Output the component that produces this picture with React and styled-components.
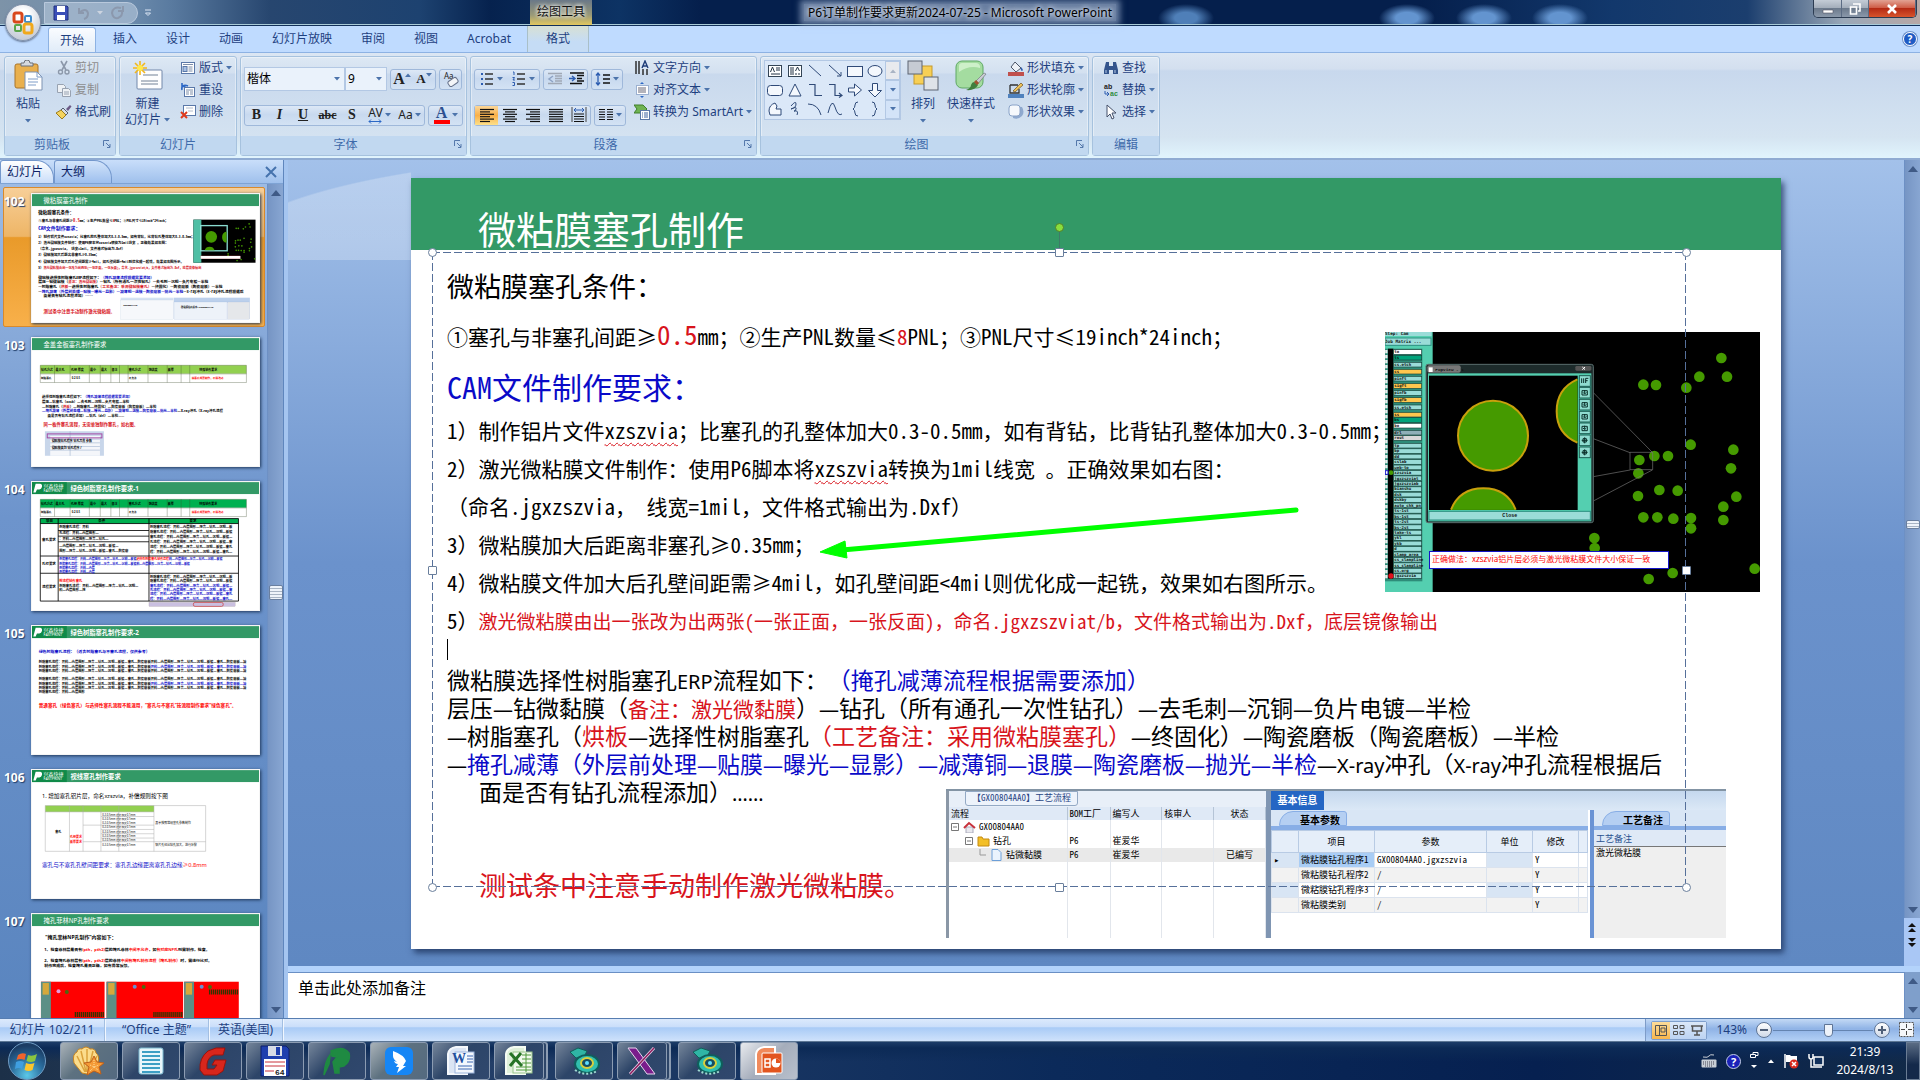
import React from 'react';
import styled, { createGlobalStyle, css } from 'styled-components';

const ui = '"Noto Sans", "Noto Sans CJK SC", sans-serif';
const song = '"Noto Sans Mono CJK SC", "Liberation Mono", "Noto Sans CJK SC", monospace';

const RED = '#d8141c';
const BLUE = '#0a0ac8';
const BLACK = '#000';

/* ---------- data ---------- */

const tabs = ['插入', '设计', '动画', '幻灯片放映', '审阅', '视图', 'Acrobat'];

// y is the baseline used by the thumbnail
const lines = [
    { kind: 'head', size: 27, y: 118, parts: [['微粘膜塞孔条件：']] },
    {
        kind: 'head',
        size: 21,
        y: 167,
        parts: [
            ['①塞孔与非塞孔间距≥'],
            ['0.5', RED, 27],
            ['mm；②生产PNL数量≤'],
            ['8', RED],
            ['PNL；③PNL尺寸≤19inch*24inch；'],
        ],
    },
    { kind: 'head', size: 30, y: 218, parts: [['CAM文件制作要求：', BLUE]] },
    {
        kind: 'step',
        size: 21,
        y: 262,
        parts: [
            ['1）制作铝片文件'],
            ['xzszvia', BLACK, 21, true],
            ['；比塞孔的孔整体加大0.3-0.5mm，如有背钻，比背钻孔整体加大0.3-0.5mm；'],
        ],
    },
    {
        kind: 'step',
        size: 21,
        y: 300,
        parts: [
            ['2）激光微粘膜文件制作：使用P6脚本将'],
            ['xzszvia', BLACK, 21, true],
            ['转换为1mil线宽 。正确效果如右图：'],
        ],
    },
    {
        kind: 'step',
        size: 21,
        y: 338,
        parts: [['（命名.jgxzszvia， 线宽=1mil，文件格式输出为.Dxf）']],
    },
    { kind: 'step', size: 21, y: 376, parts: [['3）微粘膜加大后距离非塞孔≥0.35mm；']] },
    {
        kind: 'step',
        size: 21,
        y: 414,
        narrowSigns: true,
        parts: [['4）微粘膜文件加大后孔壁间距需≥4mil，如孔壁间距<4mil则优化成一起铣，效果如右图所示。']],
    },
    {
        kind: 'step',
        size: 21,
        y: 452,
        parts: [
            ['5）'],
            [
                '激光微粘膜由出一张改为出两张(一张正面，一张反面)，命名.jgxzszviat/b，文件格式输出为.Dxf，底层镜像输出',
                RED,
                19,
            ],
        ],
    },
    { kind: 'caret', size: 21, y: 480, parts: [] },
    {
        kind: 'flow',
        size: 23,
        y: 511,
        parts: [['微粘膜选择性树脂塞孔ERP流程如下：'], ['（掩孔减薄流程根据需要添加）', BLUE]],
    },
    {
        kind: 'flow',
        size: 23,
        y: 539,
        parts: [
            ['层压—钻微黏膜（'],
            ['备注：激光微黏膜', RED, 21],
            ['）—钻孔（所有通孔一次性钻孔）—去毛刺—沉铜—负片电镀—半检'],
        ],
    },
    {
        kind: 'flow',
        size: 23,
        y: 566,
        parts: [
            ['—树脂塞孔（'],
            ['烘板', RED],
            ['—选择性树脂塞孔'],
            ['（工艺备注：采用微粘膜塞孔）', RED],
            ['—终固化）—陶瓷磨板（陶瓷磨板）—半检'],
        ],
    },
    {
        kind: 'flow',
        size: 23,
        y: 594,
        parts: [
            ['—'],
            ['掩孔减薄（外层前处理—贴膜—曝光—显影）—减薄铜—退膜—陶瓷磨板—抛光—半检', BLUE],
            ['—X-ray冲孔（X-ray冲孔流程根据后'],
        ],
    },
    { kind: 'flow', size: 23, y: 621, indent: true, parts: [['面是否有钻孔流程添加）……']] },
    {
        kind: 'last',
        size: 27,
        y: 717,
        indent: true,
        parts: [['测试条中注意手动制作激光微粘膜。', RED]],
    },
];

const layers = [
    ['to', 96, '#fff'],
    ['ts', 113, '#00a37b'],
    ['cs.etch', 134, '#9adcd8'],
    ['cs', 155, '#ffc64e'],
    ['pinft', 176, '#9adcd8'],
    ['sigft', 198, '#ffc64e'],
    ['pinfb', 219, '#9adcd8'],
    ['sigfb', 240, '#ffc64e'],
    ['ss.etch', 262, '#9adcd8'],
    ['ss', 284, '#ffc64e'],
    ['bs', 300, '#00a37b'],
    ['bo', 317, '#fff'],
    ['drl', 338, '#8fb0b8'],
    ['rout', 354, '#d8d8d8'],
    ...[
        'tp', 'bp', 'dd', 'cslab', 'web-to', 'xzszvia', 'jgxzszviat', 'jgxzszviab', 'bianshu', 'dsk',
        'dskby', 'auto_chk_pn', 'ts-1st', 'bs-1st', 'ts-2st', 'bs-2st', 'take-ts', 'ykl', 'ykb', 'd',
        'clamp_area', 'cs_clampline', 'ss_clampline', 'cs.org', 'jgxzszvia',
    ].map((name, i) => [name, 377 + i * 16.3, '#9adcd8']),
];

const drills = [
    [790, 194], [828, 195], [919, 203], [958, 170], [1024, 114], [1041, 170], [932, 374], [1060, 389],
    [1053, 445], [778, 420], [823, 408], [864, 408], [775, 460], [838, 510], [893, 512], [774, 528],
    [1069, 530], [1030, 560], [1030, 600], [790, 592], [832, 592], [880, 596], [933, 594], [933, 625],
    [643, 654], [644, 684], [878, 759], [806, 777], [1124, 746],
];

/* ---------- small icons ---------- */

const Svg = ({ w = 16, h = 16, box, children }) => (
    <svg width={w} height={h} viewBox={box || `0 0 ${w} ${h}`} fill="none" aria-hidden="true">
        {children}
    </svg>
);

const Caret = ({ up, color = '#4c73ab' }) => (
    <Svg w={6} h={4}>
        <path d={up ? 'M0 4l3-3.5L6 4z' : 'M0 0h6L3 3.5z'} fill={color} />
    </Svg>
);

const Lines = ({ x = 1, widths = [14, 10, 14, 10, 14, 10], align = 'left' }) =>
    widths.map((w, i) => {
        const sx = align === 'left' ? x : align === 'right' ? x + 14 - w : x + (14 - w) / 2;
        return <path key={i} d={`M${sx} ${2.5 + i * 2.4}h${w}`} stroke="#111" strokeWidth="1.2" />;
    });

const icons = {
    paste: (
        <Svg w={30} h={32}>
            <rect x="2" y="4" width="23" height="24" rx="2" fill="#e9b04e" stroke="#a9742a" />
            <path d="M8 6V3h3a3 3 0 016 0h3v3z" fill="#d5d9df" stroke="#6d7178" />
            <path d="M12 12h12l5 5v13H12z" fill="#fff" stroke="#7f93b2" />
            <path d="M24 12v5h5M15 19h10M15 22h10M15 25h8" stroke="#7f9dc8" />
        </Svg>
    ),
    cut: (
        <Svg>
            <path d="M5 1l5 9M11 1L6 10" stroke="#8c98aa" strokeWidth="1.6" />
            <circle cx="4.500" cy="12" r="2" stroke="#8c98aa" strokeWidth="1.4" />
            <circle cx="11" cy="12" r="2" stroke="#8c98aa" strokeWidth="1.4" />
        </Svg>
    ),
    copy: (
        <Svg>
            <path d="M1.500 2.500h6l2 2v6h-8z" fill="#eef1f5" stroke="#98a2b1" />
            <path d="M6.500 6.500h6l2 2v6h-8z" fill="#eef1f5" stroke="#98a2b1" />
            <path d="M8 10h5M8 12h5" stroke="#98a2b1" />
        </Svg>
    ),
    brush: (
        <Svg>
            <path d="M10 5l4-4 1.500 1.500L12 7z" fill="#6c5a86" />
            <path d="M7 4l5 5-2 2-5-5z" fill="#d7dde6" stroke="#555f70" />
            <path d="M5 6l5 5-4 4L0 9z" fill="#f4d35e" stroke="#9c7c1c" />
        </Svg>
    ),
    newSlide: (
        <Svg w={30} h={30}>
            <rect x="4" y="9" width="25" height="19" rx="1" fill="#fdfdfe" stroke="#7388aa" />
            <path d="M10 14h15M8 20h17M8 23h17" stroke="#b7bfca" strokeWidth="2" />
            <path d="M7 0v14M0 7h14M2 2l10 10M12 2L2 12" stroke="#f2b61c" strokeWidth="1.6" />
            <circle cx="7" cy="7" r="3" fill="#ffe94d" />
        </Svg>
    ),
    layout: (
        <Svg>
            <rect x="1.500" y="2.500" width="13" height="11" fill="#fff" stroke="#5a78a8" />
            <path d="M3 4.500h10M8.500 7h4M8.500 9h4M8.500 11h4" stroke="#7d8ea9" />
            <rect x="3" y="6.500" width="4" height="5" fill="#a7c0e4" stroke="#5a78a8" />
        </Svg>
    ),
    reset: (
        <Svg>
            <rect x="4.500" y="5.500" width="10" height="9" fill="#fff" stroke="#5a78a8" />
            <path d="M6 8h7M6 10h3M10 10h3M6 12h3M10 12h3" stroke="#7d8ea9" />
            <path d="M2 8c-1-4 2-6 6-4M2 1v3.500h3.500" stroke="#2c68c6" strokeWidth="1.600" />
        </Svg>
    ),
    remove: (
        <Svg>
            <rect x="3.500" y="1.500" width="12" height="10" fill="#fff" stroke="#5a78a8" />
            <path d="M6 4h7M8 7h5" stroke="#b2bccb" />
            <path d="M1 8l6 6M7 8l-6 6" stroke="#e03a1c" strokeWidth="2" />
        </Svg>
    ),
    bullets: (
        <Svg>
            <path d="M2 2h2v2H2zM2 7h2v2H2zM2 12h2v2H2z" fill="#2c5cb0" />
            <path d="M6 3h8M6 8h8M6 13h8" stroke="#333" strokeWidth="1.300" />
        </Svg>
    ),
    numbers: (
        <Svg>
            <path d="M2 1h1v3M1.500 6.500h2L2 9h2M1.500 11.500h2v3h-2" stroke="#2c5cb0" />
            <path d="M6 3h8M6 8h8M6 13h8" stroke="#333" strokeWidth="1.300" />
        </Svg>
    ),
    outdent: (
        <Svg>
            <path d="M1 2.500h14M8 5h7M8 7.500h7M8 10h7M1 12.500h14" stroke="#a0a8b5" strokeWidth="1.300" />
            <path d="M6 5L2 8l4 3" stroke="#8ea3c4" strokeWidth="1.500" />
        </Svg>
    ),
    indent: (
        <Svg>
            <path d="M1 2h14M8 4.500h7M8 7.500h5M8 10h7M1 12.500h12" stroke="#111" strokeWidth="1.600" />
            <path d="M0 7.500h5M3 5l3 2.500L3 10" stroke="#2c5cb0" strokeWidth="1.400" />
        </Svg>
    ),
    spacing: (
        <Svg>
            <path d="M3 2v12M1 4.500L3 2l2 2.500M1 11.500L3 14l2-2.500" stroke="#2c5cb0" strokeWidth="1.300" />
            <path d="M8 4h7M8 8h7M8 12h7" stroke="#111" strokeWidth="1.300" />
        </Svg>
    ),
    left: <Svg><Lines /></Svg>,
    center: <Svg><Lines align="center" /></Svg>,
    right: <Svg><Lines align="right" /></Svg>,
    justify: <Svg><Lines widths={[14, 14, 14, 14, 14, 14]} /></Svg>,
    spread: (
        <Svg>
            <path d="M1 0v15M15 0v15" stroke="#444" />
            <path d="M3 3h10M5 1L3 3l2 2M11 1l2 2-2 2" stroke="#2c5cb0" />
            <path d="M3 7h10M3 9.500h10M3 12h10M3 14.500h10" stroke="#111" strokeWidth="1.200" />
        </Svg>
    ),
    columns: (
        <Svg>
            <path
                d="M1 2.500h6M1 5h6M1 7.500h6M1 10h6M1 12.500h6M9 2.500h6M9 5h6M9 7.500h6M9 10h6M9 12.500h6"
                stroke="#111"
                strokeWidth="1.200"
            />
        </Svg>
    ),
    direction: (
        <Svg>
            <path d="M2 1v13M5 1v13" stroke="#222" strokeWidth="1.400" />
            <path d="M8 8l3-7 3 7M9 6h4" stroke="#1d3b77" strokeWidth="1.400" />
            <path d="M9 9v6M13 9v6" stroke="#222" strokeWidth="1.400" />
        </Svg>
    ),
    alignText: (
        <Svg>
            <rect x="2.500" y="3.500" width="12" height="9" fill="#fff" stroke="#9bb0d0" />
            <path d="M4 6h8M4 8h8M4 10h8" stroke="#667" />
            <path d="M6 2l2-2 2 2zM6 14l2 2 2-2z" fill="#2c68c6" />
        </Svg>
    ),
    smartArt: (
        <Svg>
            <path d="M0 1h9l4 4-4 4H0l3-4z" fill="#6fb352" stroke="#3f7f2b" />
            <rect x="6.500" y="6.500" width="9" height="9" fill="#fff" stroke="#5a78a8" />
            <path d="M8 9h1M10 9h4M8 11h1M10 11h4M8 13h1M10 13h4" stroke="#3d62a0" />
        </Svg>
    ),
    arrange: (
        <Svg w={32} h={32}>
            <rect x="7" y="6" width="18" height="18" fill="#f7cf55" stroke="#c59a2c" />
            <rect x="1" y="1" width="14" height="13" fill="#c6cbd3" stroke="#5c6572" />
            <rect x="17" y="17" width="14" height="13" fill="#dfe3e8" stroke="#5c6572" />
        </Svg>
    ),
    styles: (
        <Svg w={32} h={32}>
            <rect x="1" y="1" width="27" height="27" rx="6" fill="#a4dca0" stroke="#5fa864" />
            <path d="M4 12q10-7 21-4V6q-1-3-4-3H7Q4 3 4 6z" fill="#cdf0c9" />
            <path d="M29 13l2 1-9 11-3-2z" fill="#c9ccd2" stroke="#676c75" strokeWidth=".6" />
            <path d="M19 22l4 3q-3 6-12 5 5-2 5-5 1-3 3-3z" fill="#417f3e" />
            <path d="M20 21l3 3" stroke="#a0522d" strokeWidth="3" />
        </Svg>
    ),
    fill: (
        <Svg>
            <path d="M7 2l6 6-5 4-5-5z" fill="#eef2f7" stroke="#4c5668" />
            <path d="M13 7q3 3 1 4-2-1-1-4z" fill="#2c5cb0" />
            <rect x="0" y="12" width="16" height="4" fill="#c0504d" />
        </Svg>
    ),
    outline: (
        <Svg>
            <path d="M2 3h8M2 3v8h9V7" stroke="#333" strokeWidth="1.300" />
            <path d="M5 9l8-8 2 2-8 7z" fill="#f0c35a" stroke="#6b4f1b" strokeWidth=".7" />
            <rect x="0" y="12" width="16" height="4" fill="#4f81bd" />
        </Svg>
    ),
    effects: (
        <Svg>
            <path d="M5 5q3-3 9-2 3 5 0 9-4 4-9 2z" fill="#8fa9cf" />
            <rect x="1" y="1" width="11" height="11" rx="3" fill="#f5f8fc" stroke="#8aa3c8" />
        </Svg>
    ),
    find: (
        <Svg>
            <path d="M3 2h3v4h4V2h3l2 8v4h-5v-4H6v4H1v-4z" fill="#33548c" />
            <path d="M3 10v3M12 10v3" stroke="#b6c8e6" />
        </Svg>
    ),
    replace: (
        <Svg>
            <path d="M2 9v3h3M4 10l2 2-2 2" stroke="#2c5cb0" />
            <text x="1" y="7" fontSize="7" fontWeight="700" fontFamily="Liberation Sans" fill="#222">ab</text>
            <text x="7" y="14" fontSize="7" fontWeight="700" fontFamily="Liberation Sans" fill="#2e8b3d">ac</text>
        </Svg>
    ),
    select: (
        <Svg>
            <path d="M4 1v12l3-3 2 5 2-1-2-5h4z" fill="#fff" stroke="#44506a" />
        </Svg>
    ),
    eraser: (
        <Svg>
            <text x="1" y="8" fontSize="8" fontFamily="Noto Sans" fill="#222">Aa</text>
            <rect x="5" y="8" width="10" height="6" rx="2" fill="#f3f5f8" stroke="#65718a" transform="rotate(-35 10 11)" />
        </Svg>
    ),
};

const shapeIcons = [
    <g key="0"><rect x="1.500" y="2.500" width="13" height="11" fill="#fff" stroke="#345" /><path d="M3.500 9l2-5 2 5M9 5h4M9 7h4M4 11h9" stroke="#234" /></g>,
    <g key="1"><rect x="1.500" y="2.500" width="13" height="11" fill="#fff" stroke="#345" /><path d="M8.500 8l2-4 2 4M4 4v8M6 4v8M9 10v2M12 10v2" stroke="#234" /></g>,
    <path key="2" d="M2 2l12 11" stroke="#2f4a78" />,
    <path key="3" d="M2 2l12 11M14 9v4h-4" stroke="#2f4a78" />,
    <rect key="4" x=".5" y="3.500" width="15" height="10" fill="#f4f8fd" stroke="#2f4a78" />,
    <ellipse key="5" cx="8" cy="8" rx="7" ry="5.500" fill="#f4f8fd" stroke="#2f4a78" />,
    <rect key="6" x=".5" y="3.500" width="15" height="10" rx="3" fill="#f4f8fd" stroke="#2f4a78" />,
    <path key="7" d="M8 2l6 12H2z" fill="#f4f8fd" stroke="#2f4a78" />,
    <path key="8" d="M2 2.500h6v11h7" stroke="#2f4a78" strokeWidth="1.200" />,
    <path key="9" d="M2 2.500h6v11h7M12 11l3 2.500-3 2" stroke="#2f4a78" strokeWidth="1.200" />,
    <path key="10" d="M1.500 6h6V2l7 6-7 6v-4h-6z" fill="#f4f8fd" stroke="#2f4a78" />,
    <path key="11" d="M5.500 1.500h5v7h4L8 15 1.500 8.500h4z" fill="#f4f8fd" stroke="#2f4a78" />,
    <path key="12" d="M3 14l-1-4q0-6 6-8l2 3-1 3h5v6z" fill="#f4f8fd" stroke="#2f4a78" />,
    <path key="13" d="M4 5q5-6 5-2t-5 5q6-3 5 0t-2 2q5-1 3 4" stroke="#2f4a78" />,
    <path key="14" d="M1 3q10 0 13 11" stroke="#2f4a78" />,
    <path key="15" d="M1 12Q5-4 8 6t7 7" stroke="#2f4a78" />,
    <path key="16" d="M11 1q-3 0-3 3t-2 4q2 1 2 4t3 3" stroke="#2f4a78" />,
    <path key="17" d="M5 1q3 0 3 3t2 4q-2 1-2 4t-3 3" stroke="#2f4a78" />,
];

/* ---------- ribbon ---------- */

const Tool = ({ icon, label, drop, off }) => (
    <SmallButton disabled={off}>
        {icons[icon]}
        {label}
        {drop && <Caret />}
    </SmallButton>
);

const Group = ({ title, width, launcher, children }) => (
    <StyledGroup $width={width} aria-label={title}>
        <GroupBody>{children}</GroupBody>
        <GroupTitle $launcher={launcher}>
            {title}
            {launcher && (
                <Launcher aria-label={`${title}选项`}>
                    <Svg w={8} h={8}>
                        <path d="M.5 6V.5H6M3 3l4 4M7 4v3.500H4" stroke="#5478ab" />
                    </Svg>
                </Launcher>
            )}
        </GroupTitle>
    </StyledGroup>
);

const Ribbon = () => (
    <StyledRibbon>
        <Group title="剪贴板" width={112} launcher>
            <BigButton>
                {icons.paste}
                <span>粘贴</span>
                <Caret />
            </BigButton>
            <ToolColumn>
                <Tool icon="cut" label="剪切" off />
                <Tool icon="copy" label="复制" off />
                <Tool icon="brush" label="格式刷" />
            </ToolColumn>
        </Group>
        <Group title="幻灯片" width={118}>
            <BigButton>
                {icons.newSlide}
                <span>新建</span>
                <span>
                    幻灯片 <Caret />
                </span>
            </BigButton>
            <ToolColumn>
                <Tool icon="layout" label="版式" drop />
                <Tool icon="reset" label="重设" />
                <Tool icon="remove" label="删除" />
            </ToolColumn>
        </Group>
        <Group title="字体" width={227} launcher>
            <ControlRows>
                <ControlRow>
                    <Combos>
                        <Combo $width={101}>
                            <select aria-label="字体" defaultValue="楷体">
                                <option>楷体</option>
                            </select>
                            <Caret />
                        </Combo>
                        <Combo $width={42}>
                            <select aria-label="字号" defaultValue="9">
                                <option>9</option>
                            </select>
                            <Caret />
                        </Combo>
                    </Combos>
                    <ButtonSet>
                        <Glyph $width={22} $size={16} $serif $raised aria-label="增大字号">A<Caret up /></Glyph>
                        <Glyph $width={22} $size={13} $serif $raised aria-label="减小字号">A<Caret /></Glyph>
                    </ButtonSet>
                    <ButtonSet>
                        <Glyph $width={21} aria-label="清除格式">{icons.eraser}</Glyph>
                    </ButtonSet>
                </ControlRow>
                <ControlRow>
                    <ButtonSet>
                        <Glyph $width={23} $size={14} $serif>B</Glyph>
                        <Glyph $width={23} $size={14} $serif><i>I</i></Glyph>
                        <Glyph $width={24} $size={14} $serif><u>U</u></Glyph>
                        <Glyph $width={25} $size={12} $serif><s>abc</s></Glyph>
                        <Glyph $width={24} $size={14} $serif>S</Glyph>
                        <Glyph $width={31} $size={12}>
                            <Kern>
                                AV
                                <Svg w={14} h={5}>
                                    <path d="M1 2.500h12M3 .5l-2 2 2 2M11 .5l2 2-2 2" stroke="#2c68c6" />
                                </Svg>
                            </Kern>
                            <Caret />
                        </Glyph>
                        <Glyph $width={29} $size={12}>Aa<Caret /></Glyph>
                    </ButtonSet>
                    <ButtonSet>
                        <Glyph $width={33} $size={16} $serif aria-label="字体颜色">
                            <ColorA>A</ColorA>
                            <Caret />
                        </Glyph>
                    </ButtonSet>
                </ControlRow>
            </ControlRows>
        </Group>
        <Group title="段落" width={287} launcher>
            <ControlRows>
                <ControlRow>
                    <ButtonSet>
                        <Glyph $width={32} aria-label="项目符号">{icons.bullets}<Caret /></Glyph>
                        <Glyph $width={32} aria-label="编号">{icons.numbers}<Caret /></Glyph>
                    </ButtonSet>
                    <ButtonSet>
                        <Glyph $width={22} aria-label="降低列表级别">{icons.outdent}</Glyph>
                        <Glyph $width={21} aria-label="提高列表级别">{icons.indent}</Glyph>
                    </ButtonSet>
                    <ButtonSet>
                        <Glyph $width={30} aria-label="行距">{icons.spacing}<Caret /></Glyph>
                    </ButtonSet>
                </ControlRow>
                <ControlRow>
                    <ButtonSet>
                        <Glyph $width={23} $on aria-label="文本左对齐">{icons.left}</Glyph>
                        <Glyph $width={23} aria-label="居中">{icons.center}</Glyph>
                        <Glyph $width={23} aria-label="文本右对齐">{icons.right}</Glyph>
                        <Glyph $width={23} aria-label="两端对齐">{icons.justify}</Glyph>
                        <Glyph $width={23} aria-label="分散对齐">{icons.spread}</Glyph>
                    </ButtonSet>
                    <ButtonSet>
                        <Glyph $width={30} aria-label="分栏">{icons.columns}<Caret /></Glyph>
                    </ButtonSet>
                </ControlRow>
            </ControlRows>
            <ToolColumn>
                <Tool icon="direction" label="文字方向" drop />
                <Tool icon="alignText" label="对齐文本" drop />
                <Tool icon="smartArt" label="转换为 SmartArt" drop />
            </ToolColumn>
        </Group>
        <Group title="绘图" width={329} launcher>
            <Gallery>
                <ShapeGrid>
                    {shapeIcons.map((shape, i) => (
                        <ShapeButton key={i} aria-label={`形状 ${i + 1}`}>
                            <Svg>{shape}</Svg>
                        </ShapeButton>
                    ))}
                </ShapeGrid>
                <GalleryScroll>
                    <button aria-label="上一行" disabled><Caret up color="#a9b4c4" /></button>
                    <button aria-label="下一行"><Caret /></button>
                    <button aria-label="其他"><Caret /></button>
                </GalleryScroll>
            </Gallery>
            <BigButton>
                {icons.arrange}
                <span>排列</span>
                <Caret />
            </BigButton>
            <BigButton>
                {icons.styles}
                <span>快速样式</span>
                <Caret />
            </BigButton>
            <ToolColumn>
                <Tool icon="fill" label="形状填充" drop />
                <Tool icon="outline" label="形状轮廓" drop />
                <Tool icon="effects" label="形状效果" drop />
            </ToolColumn>
        </Group>
        <Group title="编辑" width={68}>
            <ToolColumn>
                <Tool icon="find" label="查找" />
                <Tool icon="replace" label="替换" drop />
                <Tool icon="select" label="选择" drop />
            </ToolColumn>
        </Group>
    </StyledRibbon>
);

/* ---------- thumbnails ---------- */

const ThumbText = ({ x = 40, y, size = 21, fill = BLACK, bold = true, children }) => (
    <text x={x} y={y} fontSize={size} fill={fill} fontWeight={bold ? 700 : 400} fontFamily={ui}>
        {children}
    </text>
);

const Band = ({ title, logo }) => (
    <g>
        <rect width="1370" height="72" fill="#339966" />
        {logo && (
            <g>
                <rect width="210" height="72" fill="#0f8a48" />
                <path d="M22 10h26q16 2 12 20T38 44h-8l-8 18H8z" fill="#fff" />
                <text x="70" y="34" fontSize="30" fill="#fff" fontFamily={ui}>兴森快捷</text>
                <text x="70" y="62" fontSize="22" fill="#fff" fontFamily={ui}>FASTPRINT</text>
            </g>
        )}
        <text
            x={logo ? 232 : 70}
            y="54"
            fontSize="38"
            fill="#fff"
            fontWeight={logo ? 700 : 400}
            fontFamily={ui}
        >
            {title}
        </text>
    </g>
);

const cells = [
    [54, '钻孔方式'], [142, '最大孔'], [236, '孔径 厚度'], [350, '最小'], [416, '最大'], [480, '备注'],
    [584, '塞孔方式'], [704, '饱满度'], [820, '板厚'], [1010, '特殊制作要求'],
];

const GreenTable = ({ y, color }) => (
    <g>
        <rect x="50" y={y} width="1244" height="50" fill={color} />
        <path
            d={`M50 ${y}h1244v104H50zM50 ${y + 52}h1244M136 ${y}v104M230 ${y}v104M346 ${y}v104M412 ${y}v104M476 ${y}v104M528 ${y}v104M580 ${y}v104M700 ${y}v104M816 ${y}v104M900 ${y}v104M952 ${y}v104`}
            stroke="#3a4a2a"
            strokeWidth="2"
            fill="none"
        />
        {cells.map(([x, label]) => (
            <ThumbText key={x} x={x} y={y + 32} size={18}>{label}</ThumbText>
        ))}
        <ThumbText x={54} y={y + 84} size={16}>树脂塞孔</ThumbText>
        <ThumbText x={240} y={y + 84} size={16}>0.2 0.5</ThumbText>
        <ThumbText x={584} y={y + 84} size={16}>不允许</ThumbText>
        <ThumbText x={964} y={y + 84} size={16} fill="red">按塞孔规范制作，不得改动</ThumbText>
    </g>
);

const flowText = '树脂塞孔流程：开料—内层图形—压合—钻孔—沉铜—板镀—塞孔—陶瓷磨板—减薄铜—外层图形—蚀刻—阻焊—字符—表面处理—成型';

const thumbs = [
    {
        no: 102,
        art: (
            <g>
                <Band title="微粘膜塞孔制作" />
                {lines.map((line, i) => (
                    <text
                        key={i}
                        x={line.indent ? 70 : 38}
                        y={line.y}
                        fontSize={line.size}
                        fontWeight="700"
                        fontFamily={song}
                    >
                        {line.parts.map(([text, color, size], k) => (
                            <tspan key={k} fill={color || BLACK} fontSize={size || line.size}>
                                {text}
                            </tspan>
                        ))}
                    </text>
                ))}
                <rect x="974" y="154" width="375" height="260" />
                <rect x="974" y="154" width="48" height="260" fill="#4fbfa5" />
                <rect x="1018" y="190" width="160" height="152" fill="none" stroke="#8adcd0" strokeWidth="8" />
                <circle cx="1082" cy="258" r="35" fill="#459a00" />
                <path d="M1174 226a35 35 0 000 68zM1042 338a32 32 0 0160 0z" fill="#459a00" />
                {drills.map(([x, y], i) => (
                    <circle key={i} cx={969 + x / 3} cy={142 + y / 3} r="5" fill="#459a00" />
                ))}
                <rect x="1018" y="373" width="240" height="18" fill="#fff" stroke="#c33" />
                <rect x="535" y="625" width="320" height="14" fill="#d5e2f3" />
                <rect x="535" y="639" width="320" height="116" fill="#f6f8fb" stroke="#9db3cc" />
                <rect x="857" y="625" width="458" height="30" fill="#bcd0ec" />
                <rect x="857" y="651" width="320" height="104" fill="#edf2f9" stroke="#88a5d6" />
                <rect x="1180" y="651" width="135" height="104" fill="#e5e7ea" stroke="#88a5d6" />
                <ThumbText x={550} y={675} size={14}>GX00804AA0</ThumbText>
                <ThumbText x={900} y={690} size={14}>微粘膜钻孔程序1 GX00804AA0</ThumbText>
            </g>
        ),
    },
    {
        no: 103,
        art: (
            <g>
                <Band title="金盖金板塞孔制作要求" />
                <GreenTable y={164} color="#92d050" />
                <ThumbText x={60} y={364}>选择性树脂塞孔流程如下：<tspan fill={BLUE}>（掩孔减薄流程根据需要添加）</tspan></ThumbText>
                <ThumbText x={60} y={392}>层压—钻塞孔（xzsk）—去毛刺—沉铜—负片电镀—半检</ThumbText>
                <ThumbText x={60} y={420}>—树脂塞孔（<tspan fill={RED}>烘板</tspan>）—树脂塞孔—终固化）—陶瓷磨板（陶瓷磨板）—半检</ThumbText>
                <ThumbText x={60} y={448} fill={BLUE}>—掩孔减薄（外层前处理—贴膜—曝光—显影）—减薄铜—退膜—陶瓷磨板—抛光—半检<tspan fill={BLACK}>—X-ray冲孔（X-ray冲孔流程</tspan></ThumbText>
                <ThumbText x={94} y={476}>面是否有钻孔流程添加）—钻孔（drl）—半检……</ThumbText>
                <ThumbText x={70} y={532} size={26} fill={RED}>同一板件塞孔流程，无需单独制作塞孔，如右图。</ThumbText>
                <rect x="78" y="562" width="356" height="148" fill="#c8d6ea" />
                <rect x="110" y="590" width="300" height="120" fill="#f4f6fa" />
                <path d="M110 610h300M110 632h300M110 654h300M110 676h300M230 562v148" stroke="#8fa6c8" strokeWidth="3" />
                <rect x="92" y="578" width="330" height="24" fill="none" stroke="#a349a4" strokeWidth="6" />
                <ThumbText x={120} y={628} size={18}>微粘膜钻孔程序 钻孔刀具 参数</ThumbText>
                <ThumbText x={120} y={672} size={18}>微粘膜类别 钻孔程序 /</ThumbText>
            </g>
        ),
    },
    {
        no: 104,
        art: (
            <g>
                <Band title="绿色树脂塞孔制作要求-1" logo />
                <GreenTable y={104} color="#00b050" />
                <rect x="50" y="220" width="1196" height="30" fill="#00b050" />
                <path
                    d="M50 220h1196v498H50zM50 250h1196M158 220v498M706 220v498M50 446h1196M50 550h1196M158 292h548M158 326h548M158 360h548"
                    stroke="#000"
                    strokeWidth="5"
                    fill="none"
                />
                <ThumbText x={84} y={243}>项目</ThumbText>
                <ThumbText x={400} y={243}>条件</ThumbText>
                <ThumbText x={950} y={243}>要求</ThumbText>
                <ThumbText x={60} y={356}>塞孔要求</ThumbText>
                <ThumbText x={60} y={502}>孔径要求</ThumbText>
                <ThumbText x={60} y={636}>流程要求</ThumbText>
                {[278, 314, 348, 394, 424].map((y, i) => (
                    <ThumbText key={y} x={164} y={y} size={20}>{flowText.slice(i * 3, 9 + i * 6)}</ThumbText>
                ))}
                {[276, 306, 336, 366, 396, 426].map((y, i) => (
                    <ThumbText key={y} x={712} y={y} size={20}>{flowText.slice(i, i + 25)}</ThumbText>
                ))}
                {[472, 498, 524, 546].map((y, i) => (
                    <ThumbText key={y} x={164} y={y} size={18} fill={BLUE}>
                        {flowText.slice(0, i < 2 ? 26 : 12)}
                        {i === 0 && <tspan fill="red">选择性树脂塞孔制作流程</tspan>}
                        {i < 2 && flowText.slice(8, 26)}
                    </ThumbText>
                ))}
                <ThumbText x={164} y={600} size={20} fill="red">按流程制作塞孔</ThumbText>
                <ThumbText x={164} y={630} size={20}>{flowText.slice(0, 24)}</ThumbText>
                <ThumbText x={164} y={658} size={20}>{flowText.slice(8, 16)}</ThumbText>
                {[576, 603, 630, 657, 684, 711].map((y, i) => (
                    <ThumbText key={y} x={712} y={y} size={20} fill={i > 1 ? BLUE : BLACK}>{flowText.slice(i, i + 25)}</ThumbText>
                ))}
                <rect x="706" y="726" width="520" height="24" fill="#c9bfe0" stroke="#766" />
                <rect x="974" y="726" width="180" height="24" rx="10" fill="none" stroke="#c33" strokeWidth="4" />
            </g>
        ),
    },
    {
        no: 105,
        art: (
            <g>
                <Band title="绿色树脂塞孔制作要求-2" logo />
                <ThumbText y={162} size={24} fill={BLUE}>绿色树脂塞孔流程：（适合树脂塞孔与不塞孔流程，仅供参考）</ThumbText>
                {[222, 250, 278, 328, 354, 380, 406].map((y, i) => (
                    <ThumbText key={y} y={y} size={20}>
                        {flowText.slice(0, i === 6 ? 14 : 34)}
                        {i !== 6 && <tspan fill={i % 3 === 1 ? BLUE : BLACK}>{flowText.slice(7, 36)}</tspan>}
                    </ThumbText>
                ))}
                <ThumbText y={488} size={28} fill="red">普通塞孔（绿色塞孔）与选择性塞孔流程不能混用，“塞孔与不塞孔”按流程制作要求“绿色塞孔”。</ThumbText>
            </g>
        ),
    },
    {
        no: 106,
        art: (
            <g>
                <Band title="视线塞孔制作要求" logo />
                <ThumbText x={60} y={168} size={34} bold={false}>1. 增加塞孔铝片层，命名xzszvia，补偿规则按下图</ThumbText>
                <rect x="80" y="214" width="656" height="38" fill="#92d050" />
                <path
                    d="M80 214h968v276H80zM80 252h656M226 214v276M308 214v276M416 214v276M524 214v276M736 214v276M416 280h320M308 332h428M416 358h320M416 384h320M416 410h320M308 432h740"
                    stroke="#aaa"
                    strokeWidth="3"
                    fill="none"
                />
                {[274, 300, 326, 352, 378, 404, 430, 460].map(y => (
                    <ThumbText key={y} x={424} y={y} size={16} bold={false}>0.2-0.5mm 铝片加大0.1mm</ThumbText>
                ))}
                <ThumbText x={140} y={378} size={18}>塞孔</ThumbText>
                <ThumbText x={230} y={410} size={18} fill="red">孔径要求</ThumbText>
                <ThumbText x={230} y={440} size={18} fill="red">板厚要求</ThumbText>
                <ThumbText x={744} y={324} size={18} bold={false}>其余按照常规塞孔参数制作</ThumbText>
                <ThumbText x={744} y={456} size={18} bold={false}>铝片孔径比钻孔加大，进行补偿</ThumbText>
                <ThumbText x={60} y={582} size={34} bold={false} fill={BLUE}>
                    塞孔与不塞孔孔壁间距要求：塞孔孔边缘距离塞孔孔边缘<tspan fill="red">≥0.8mm</tspan>
                </ThumbText>
            </g>
        ),
    },
    {
        no: 107,
        art: (
            <g>
                <Band title="掩孔菲林NP孔制作要求" />
                <ThumbText x={80} y={150} size={30}>“掩孔菲林NP孔制作”内容如下：</ThumbText>
                <ThumbText x={74} y={222} size={24}>1、检查菲林层是否有<tspan fill="red">(pth，pth2)</tspan>层的掩孔菲林<tspan fill="red">中间不允许</tspan>，如<tspan fill="red">有对应NP孔</tspan>则需制作，检查。</ThumbText>
                <ThumbText x={74} y={286} size={24}>2、检查掩孔菲林层有<tspan fill="red">(pth，pth2)</tspan>层的菲林<tspan fill="red">中间有掩孔制作流程（掩孔制作）</tspan>时，需进行比对。</ThumbText>
                <ThumbText x={74} y={320} size={24}>制作完成后，检查掩孔是否正确，如有异常反馈。</ThumbText>
                {[[54, 384], [450, 462], [918, 330]].map(([x, w], i) => (
                    <g key={x}>
                        <rect x={x} y="408" width={w} height="380" fill="#f00" />
                        <rect x={x} y="408" width="60" height="380" fill="#5c8f86" />
                        <rect x={x + 10} y="416" width="38" height="70" fill="#d6a83c" />
                        <circle cx={x + (i === 1 ? 170 : 106)} cy={i === 0 ? 466 : 438} r="12" fill={i === 0 ? '#e69ad8' : '#6a8fd0'} />
                        <circle cx={x + (i === 1 ? 224 : 156)} cy={i === 0 ? 470 : 440} r="12" fill="#4a6a10" />
                        <path d={`M${x + w - 180} ${i === 2 ? 470 : 606}h180`} stroke="#330" strokeWidth="30" strokeDasharray="8 4" />
                    </g>
                ))}
            </g>
        ),
    },
];

const ScrollArrow = ({ label, up }) => (
    <ArrowButton aria-label={label}>
        <Svg w={10} h={6}>
            <path d={up ? 'M0 6l5-6 5 6z' : 'M0 0h10L5 6z'} fill="#3f5a86" />
        </Svg>
    </ArrowButton>
);

const SidePanel = () => (
    <StyledSide>
        <SideTabs>
            <SideTab $on>幻灯片</SideTab>
            <SideTab>大纲</SideTab>
            <CloseButton aria-label="关闭">
                <Svg w={12} h={12}>
                    <path d="M1 1l10 10M11 1L1 11" stroke="#4673ad" strokeWidth="2" />
                </Svg>
            </CloseButton>
        </SideTabs>
        <SideBody>
            <ThumbList>
                {thumbs.map((thumb, i) => (
                    <li key={thumb.no}>
                        <Thumb $on={i === 0}>
                            <ThumbNo>{thumb.no}</ThumbNo>
                            <ThumbArt viewBox="0 0 1370 771">{thumb.art}</ThumbArt>
                        </Thumb>
                    </li>
                ))}
            </ThumbList>
            <ScrollTrack>
                <ScrollArrow label="向上滚动" up />
                <ScrollGap $grow={48} />
                <ScrollThumb />
                <ScrollGap $grow={50} />
                <ScrollArrow label="向下滚动" />
            </ScrollTrack>
        </SideBody>
    </StyledSide>
);

/* ---------- slide ---------- */

// latin words, dashes and dots in the flow chart lines use the proportional face
const runs = (text, line) => {
    if (line.kind !== 'flow' && !line.narrowSigns) return text;
    const pattern = line.narrowSigns ? /(≥)/ : /([A-Za-z-]+|—|…+)/;
    return text.split(pattern).map((run, i) => (i % 2 ? <Latin key={i}>{run}</Latin> : run));
};

const PcbPicture = () => (
    <PcbSvg viewBox="15 36 1125 780" role="img" aria-label="塞孔图层">
        <rect x="15" y="36" width="1125" height="780" fill="#000" />
        <rect x="15" y="36" width="143" height="780" fill="#54cfb0" />
        <rect x="15" y="36" width="140" height="12" fill="#9adcd8" />
        <rect x="15" y="54" width="138" height="22" fill="#9adcd8" stroke="#2c8f80" strokeWidth="3" />
        <rect x="15" y="86" width="112" height="698" fill="#2e8c79" />
        <rect x="24" y="86" width="16" height="690" fill="#000" />
        <path d="M19 90v690" stroke="#eee" strokeWidth="7" strokeDasharray="10 5" />
        <g fontFamily='"DejaVu Sans Mono", "Liberation Mono", monospace' fontWeight="700" fontSize="12" fill="#111">
            <text x="15" y="46" fontSize="13">Step: Cam</text>
            <text x="15" y="70" fontSize="13">Job Matrix ...</text>
            {layers.map(([name, y, color]) => (
                <g key={name}>
                    <rect x="41" y={y - 7} width="84" height="14" fill={color} stroke="#17453d" strokeWidth="2" />
                    <text x="43" y={y + 4}>{name}</text>
                </g>
            ))}
        </g>
        <circle cx="33" cy="458" r="7" fill="#459a00" />
        <rect x="16" y="452" width="8" height="11" fill="#fff" stroke="#1414c8" strokeWidth="3" />
        <circle cx="33" cy="768" r="8" fill="#e0101c" />
        {drills.map(([x, y], i) => (
            <circle key={i} cx={x} cy={y} r="16" fill="#459a00" />
        ))}
        <path
            d="M640 218L817 397M640 356L750 398M640 470L750 450M640 543L817 450M750 397h68v52h-68z"
            stroke="#777"
            strokeWidth="2"
            fill="none"
        />
        <rect x="138" y="133" width="502" height="475" rx="6" fill="#1d2b2b" stroke="#5b6e6e" strokeWidth="3" />
        <rect x="144" y="160" width="490" height="444" fill="#54cfb0" />
        <rect x="142" y="136" width="100" height="22" rx="6" fill="#777" />
        <path d="M146 142h12v14h-12z" fill="#fff" />
        <text x="166" y="153" fontSize="13" fontFamily="Liberation Mono" fontWeight="700" fill="#111">Popview - 1</text>
        <rect x="586" y="138" width="48" height="14" rx="4" fill="#555" />
        <path d="M607 141l8 8M615 141l-8 8" stroke="#fff" strokeWidth="3" />
        <rect x="147" y="167" width="446" height="403" fill="#000" />
        <g fill="#459a00" stroke="#c8a00c" strokeWidth="6">
            <circle cx="339" cy="347" r="105" />
            <path d="M592 178q-62 28-62 96t62 94z" stroke="none" />
            <path d="M592 178q-62 28-62 96t62 94" />
            <path d="M213 569q26-64 97-64t97 64z" stroke="none" />
            <path d="M213 569q26-64 97-64t97 64" />
        </g>
        {[183, 218, 254, 290, 325, 361, 397].map((y, i) => (
            <g key={y}>
                <rect x="598" y={y - 16} width="33" height="32" fill="#8fdcd0" stroke="#1d5c52" strokeWidth="3" />
                <path
                    d={
                        i === 0
                            ? `M605 ${y - 8}v14M611 ${y - 8}v14M617 ${y + 6}v-14h8M617 ${y - 1}h6`
                            : i > 4
                              ? `M614 ${y - 9}v18M605 ${y}h18M609 ${y - 5}h10v10h-10z`
                              : `M606 ${y - 6}h16v13h-16zM614 ${y - 8}v10M609 ${y - 1}l5 5 5-5`
                    }
                    stroke="#0b2f2a"
                    strokeWidth="3"
                    fill="none"
                />
            </g>
        ))}
        <rect x="147" y="574" width="484" height="26" fill="#9adcd8" stroke="#2c8f80" strokeWidth="3" />
        <text x="389" y="592" textAnchor="middle" fontSize="15" fontFamily="Liberation Mono" fontWeight="700" fill="#111">
            Close
        </text>
    </PcbSvg>
);

const params = [
    ['微粘膜钻孔程序1', 'GX00804AA0.jgxzszvia'],
    ['微粘膜钻孔程序2', '/'],
    ['微粘膜钻孔程序3', '/'],
    ['微粘膜类别', '/'],
];

const Expander = () => (
    <Svg w={9} h={9}>
        <path d="M.5.500h7v7h-7zM2 4h4" stroke="#777" />
    </Svg>
);

const ErpPicture = () => (
    <Erp>
        <ErpTree>
            <ErpLegend>【GX00804AA0】工艺流程</ErpLegend>
            <TreeTable>
                <thead>
                    <tr>
                        <th>流程</th>
                        <th>BOM工厂</th>
                        <th>编写人</th>
                        <th>核审人</th>
                        <th>状态</th>
                    </tr>
                </thead>
                <tbody>
                    <tr>
                        <td>
                            <Node $level={0}>
                                <Expander />
                                <Svg w={13} h={12}>
                                    <path d="M3 6h7v6H3z" fill="#e8e8ee" stroke="#aab" />
                                    <path d="M1 7l5-5 6 5" stroke="#c8323c" strokeWidth="2" />
                                </Svg>
                                GX00804AA0
                            </Node>
                        </td>
                        <td /><td /><td /><td />
                    </tr>
                    <tr>
                        <td>
                            <Node $level={1}>
                                <Expander />
                                <Svg w={13} h={12}>
                                    <path d="M1 2h4l1 2h6v7H1z" fill="#f3bf26" stroke="#c48a10" />
                                </Svg>
                                钻孔
                            </Node>
                        </td>
                        <td>P6</td><td>崔爱华</td><td /><td />
                    </tr>
                    <TreeRow $on>
                        <td>
                            <Node $level={2}>
                                <Svg w={8} h={12}>
                                    <path d="M1 0v6h6" stroke="#999" />
                                </Svg>
                                <Svg w={13} h={12}>
                                    <path d="M2 .5h6l3 3v8H2z" fill="#eaf3fd" stroke="#6c9fd8" />
                                </Svg>
                                钻微黏膜
                            </Node>
                        </td>
                        <td>P6</td><td>崔爱华</td><td /><td>已编写</td>
                    </TreeRow>
                    <FillRow><td /><td /><td /><td /><td /></FillRow>
                </tbody>
            </TreeTable>
        </ErpTree>
        <ErpDetail>
            <ErpBar><ErpBadge>基本信息</ErpBadge></ErpBar>
            <ErpPanes>
                <ErpPane>
                    <ErpTabRow><ErpTab>基本参数</ErpTab></ErpTabRow>
                    <ParamTable>
                        <thead>
                            <tr>
                                <th aria-label="行" />
                                <th>项目</th>
                                <th>参数</th>
                                <th>单位</th>
                                <th>修改</th>
                                <th aria-label="滚动" />
                            </tr>
                        </thead>
                        <tbody>
                            {params.map(([name, value], i) => (
                                <tr key={name}>
                                    <td>{i === 0 && '▸'}</td>
                                    <ParamName $on={i === 0}>{name}</ParamName>
                                    <td>{value}</td>
                                    <td />
                                    <td>Y</td>
                                    <td />
                                </tr>
                            ))}
                        </tbody>
                    </ParamTable>
                </ErpPane>
                <ErpPane $grey>
                    <ErpTabRow><ErpTab>工艺备注</ErpTab></ErpTabRow>
                    <ErpNoteHead>工艺备注</ErpNoteHead>
                    <ErpNote>激光微粘膜</ErpNote>
                </ErpPane>
            </ErpPanes>
        </ErpDetail>
    </Erp>
);

const handles = [
    ['0%', '0%', true], ['50%', '0%'], ['100%', '0%', true],
    ['0%', '50%'], ['100%', '50%'],
    ['0%', '100%', true], ['50%', '100%'], ['100%', '100%', true],
];

const Slide = () => (
    <StyledSlide>
        <SlideTitle>微粘膜塞孔制作</SlideTitle>
        <TextBody>
            {lines.map((line, i) => (
                <Line key={i} $kind={line.kind} $size={line.size} $indent={line.indent}>
                    {line.kind === 'caret' && <TextCaret />}
                    {line.parts.map(([text, color, size, wavy], k) => (
                        <Run key={k} $color={color} $size={size || line.size} $wavy={wavy}>
                            {runs(text, line)}
                        </Run>
                    ))}
                </Line>
            ))}
        </TextBody>
        <PcbPicture />
        <PcbCaption>正确做法：xzszvia铝片层必须与激光微粘膜文件大小保证一致</PcbCaption>
        <ErpPicture />
        <GreenArrow viewBox="0 0 482 60" aria-hidden="true">
            <path d="M478 9L24 49" stroke="#0f0" strokeWidth="5" strokeLinecap="round" />
            <path d="M2 51l25-11 2 17z" fill="#0f0" stroke="#0f0" />
        </GreenArrow>
        <Selection>
            <Rotate />
            {handles.map(([x, y, round]) => (
                <Handle key={x + y} $x={x} $y={y} $round={round} />
            ))}
        </Selection>
    </StyledSlide>
);

/* ---------- taskbar ---------- */

const Scanner = (
    <Svg w={34} h={30}>
        <path d="M3 6l8-4 9 3-3 6-8 1z" fill="#2fb5a5" stroke="#125e58" />
        <ellipse cx="20" cy="18" rx="12" ry="9" fill="#31bfae" stroke="#0f5f5c" strokeWidth="2" />
        <ellipse cx="20" cy="17" rx="6" ry="5" fill="#164f63" stroke="#d8cf3c" strokeWidth="2" />
        <circle cx="20" cy="17" r="2" fill="#5fe0ff" />
        <path d="M8 24q10 7 22 1" stroke="#9fd9d2" strokeWidth="2" strokeDasharray="2 2" />
    </Svg>
);

const taskItems = [
    {
        name: 'Shell',
        light: true,
        art: (
            <Svg w={34} h={30}>
                <path d="M15 28l-5-1L2 17Q0 8 5 6q1-4 5-3 4-4 8 0 5-1 6 4 4 3 2 9l-9 12z" fill="#fbdc8c" stroke="#c98520" />
                <path d="M13 26L5 10M14 26L9 5M15 26V3M16 26l5-21M17 26l8-16" stroke="#dba23c" strokeWidth="1.500" />
                <path d="M22 10l3 6 7 1-5 4 2 7-7-3-7 4 2-8-5-4 7-1z" fill="#f59a36" stroke="#c0601a" />
                <path d="M22 14v8M18 25l4-4 4 3M18 19l4 2 5-2" stroke="#fde0a0" strokeDasharray="1 1" />
            </Svg>
        ),
    },
    {
        name: '记事本',
        art: (
            <Svg w={26} h={30}>
                <rect x="1" y="2" width="24" height="26" rx="2" fill="#e8f6fb" stroke="#7bb9d0" />
                <path d="M4 6h18M4 10h18M4 14h18M4 18h18M4 22h18M4 26h18" stroke="#3d9fc4" strokeWidth="2" />
            </Svg>
        ),
    },
    {
        name: 'G',
        art: (
            <Svg w={30} h={30}>
                <path d="M27 2l-2 7H16q-6 2-7 9v5h7l3-4h-5l3-5h11l-3 11-6 4H6l-4-5q-1-12 8-19l8-3z" fill="#d8261c" stroke="#9c130c" />
            </Svg>
        ),
    },
    {
        name: '保存工具',
        art: (
            <Svg w={30} h={32}>
                <path d="M1 1h25l3 3v27H1z" fill="#1f3fae" stroke="#0c1f6b" />
                <rect x="8" y="1" width="14" height="10" fill="#d8dce6" />
                <rect x="16" y="2" width="4" height="8" fill="#1f3fae" />
                <rect x="4" y="14" width="22" height="17" fill="#fff" />
                <path d="M5 17h20M5 21h20M5 26h9" stroke="#c8323c" />
                <text x="15" y="30" fontSize="8" fontFamily="Liberation Mono" fontWeight="700" fill="#222">64</text>
            </Svg>
        ),
    },
    {
        name: 'P',
        art: (
            <Svg w={30} h={30}>
                <path d="M9 5q12-6 18 2 2 8-5 13l-5 1v6h-4l-2-11 4-5-5-1zM2 29q1-14 6-20l-1 9z" fill="#1f8a42" stroke="#1f8a42" strokeWidth="1.500" />
            </Svg>
        ),
    },
    {
        name: '钉钉',
        light: true,
        art: (
            <Svg w={30} h={30}>
                <rect x="1" y="1" width="28" height="28" rx="6" fill="#1686f5" />
                <path d="M9 5q11 4 13 10l-3 5h3l-9 7 2-6h-3l2-3q-3 0-4-3l3 1q-4-3-4-6z" fill="#fff" />
            </Svg>
        ),
    },
    {
        name: 'Word',
        art: (
            <Svg w={30} h={30}>
                <path d="M2 28V8q1-6 8-7h11v27z" fill="#dbe5f4" stroke="#f5f8fc" strokeWidth="2" />
                <rect x="9" y="6" width="19" height="21" fill="#f3f7fd" stroke="#9db6dd" />
                <path d="M21 10h6M21 13h6M21 16h6M12 20h14M12 23h14" stroke="#3a67b2" />
                <text x="6" y="17" fontSize="14" fontFamily="Liberation Serif" fontWeight="700" fill="#21509f">W</text>
            </Svg>
        ),
    },
    {
        name: 'Excel',
        stack: true,
        art: (
            <Svg w={30} h={30}>
                <path d="M2 28V8q1-6 8-7h11v27z" fill="#dff0da" stroke="#f5fcf3" strokeWidth="2" />
                <rect x="9" y="6" width="19" height="21" fill="#f1f9ee" stroke="#97c38a" />
                <path d="M18 9h9M18 13h9M18 17h9M12 21h15M12 24h15M22 7v19" stroke="#4f9a3d" />
                <path d="M6 7l12 13M17 7L6 20" stroke="#267326" strokeWidth="3" />
            </Svg>
        ),
    },
    { name: 'Genesis', art: Scanner },
    {
        name: 'X',
        stack: true,
        art: (
            <Svg w={30} h={30}>
                <path d="M1 2h8l19 26h-8z" fill="#7a1d8c" stroke="#e8d6ee" />
                <path d="M27 2L3 28" stroke="#e8d6ee" strokeWidth="3" />
                <path d="M27 2L3 28" stroke="#8c1d5c" strokeWidth="1.500" />
            </Svg>
        ),
    },
    { name: 'InCAM', art: Scanner },
    {
        name: 'PowerPoint',
        active: true,
        art: (
            <Svg w={30} h={30}>
                <path d="M2 28V8q1-6 8-7h11v27z" fill="#f08a5c" stroke="#fff" strokeWidth="2" />
                <rect x="8" y="7" width="20" height="20" rx="1" fill="#e2551f" stroke="#fff" />
                <path d="M11 13h5v8h-5zM11 17h5" stroke="#fff" strokeWidth="1.500" />
                <circle cx="22" cy="17" r="4.500" fill="#fff" />
                <path d="M22 17v-4.500a4.500 4.500 0 014.500 4.500z" fill="#e2551f" />
            </Svg>
        ),
    },
];

const App = () => (
    <>
        <GlobalStyle />
        <Window>
            <TitleBar>
                <OfficeButton aria-label="Office 按钮">
                    <Svg w={24} h={26}>
                        <rect x="3" y="3" width="8" height="9" rx="2" stroke="#d9481c" strokeWidth="3" />
                        <rect x="14" y="6" width="6" height="6" rx="1" stroke="#3f8ccc" strokeWidth="2" />
                        <rect x="4" y="15" width="6" height="6" rx="1" stroke="#5aa64a" strokeWidth="2" />
                        <rect x="13" y="14" width="8" height="9" rx="2" stroke="#f0a81c" strokeWidth="3" />
                    </Svg>
                </OfficeButton>
                <QuickBar>
                    <button aria-label="保存">
                        <Svg>
                            <path d="M1 1h13l1 1v13H1z" fill="#3b4fb8" stroke="#20307c" />
                            <path d="M4 1h8v6H4zM4 10h8v5H4z" fill="#fff" />
                        </Svg>
                    </button>
                    <button aria-label="撤消">
                        <Svg>
                            <path d="M4 3v5h5M4 8q7-6 9 0 0 5-4 6" stroke="#8b98ad" strokeWidth="2" />
                        </Svg>
                    </button>
                    <Caret color="#ccd4e0" />
                    <button aria-label="恢复">
                        <Svg>
                            <path d="M12 3q-8-2-9 5 1 6 6 5 5-2 4-7M9 6h5V1" stroke="#8b98ad" strokeWidth="2" />
                        </Svg>
                    </button>
                </QuickBar>
                <QuickMore aria-label="自定义快速访问工具栏">
                    <Svg w={8} h={8}>
                        <path d="M1 1h6M1.500 4h5L4 6.500z" stroke="#dbe5f4" />
                    </Svg>
                </QuickMore>
                <ContextTitle>绘图工具</ContextTitle>
                <WindowTitle>
                    <span>P6订单制作要求更新2024-07-25 - Microsoft PowerPoint</span>
                </WindowTitle>
                <WindowButtons>
                    <WindowButton $width={28} aria-label="最小化">
                        <Svg w={12} h={12}><path d="M1 7h10v3H1z" fill="#fff" stroke="#556" strokeWidth=".6" /></Svg>
                    </WindowButton>
                    <WindowButton $width={27} aria-label="向下还原">
                        <Svg w={12} h={12}>
                            <path d="M4 1h7v7H9M1.500 4h6v7h-6z" stroke="#fff" strokeWidth="1.600" />
                        </Svg>
                    </WindowButton>
                    <WindowButton $width={47} $red aria-label="关闭">
                        <Svg w={12} h={12}><path d="M2 2l8 8M10 2l-8 8" stroke="#fff" strokeWidth="2.600" /></Svg>
                    </WindowButton>
                </WindowButtons>
            </TitleBar>
            <TabRow>
                <Tab $on>开始</Tab>
                {tabs.map(tab => (
                    <Tab key={tab}>{tab}</Tab>
                ))}
                <Tab $context>格式</Tab>
                <HelpButton aria-label="帮助">?</HelpButton>
            </TabRow>
            <Ribbon />
            <Main>
                <SidePanel />
                <Editor>
                    <Stage>
                        <Canvas>
                            <Slide />
                        </Canvas>
                        <StageScroll>
                            <ScrollTrack>
                                <ScrollArrow label="上一行" up />
                                <ScrollGap $grow={48} />
                                <ScrollThumb $small />
                                <ScrollGap $grow={52} />
                                <ScrollArrow label="下一行" />
                            </ScrollTrack>
                            <PageButtons>
                                <button aria-label="上一张幻灯片">
                                    <Svg w={8} h={10}><path d="M0 5l4-4 4 4zM0 10l4-4 4 4z" fill="#111" /></Svg>
                                </button>
                                <button aria-label="下一张幻灯片">
                                    <Svg w={8} h={10}><path d="M0 0h8L4 4zM0 5h8L4 9z" fill="#111" /></Svg>
                                </button>
                            </PageButtons>
                        </StageScroll>
                    </Stage>
                    <Notes>
                        <textarea aria-label="备注" defaultValue="单击此处添加备注" />
                        <ScrollTrack $pale>
                            <ScrollArrow label="备注向上" up />
                            <ScrollGap $grow={1} />
                            <ScrollArrow label="备注向下" />
                        </ScrollTrack>
                    </Notes>
                </Editor>
            </Main>
            <StatusBar>
                <StatusCell $width={105}>幻灯片 102/211</StatusCell>
                <StatusCell $width={104}>“Office 主题”</StatusCell>
                <StatusCell $width={74}>英语(美国)</StatusCell>
                <StatusRight>
                    <Views>
                        <ViewButton $on aria-label="普通视图">
                            <Svg w={12} h={11}><path d="M.5.500h11v10H.5zM4.500 0v11M6 3h4v4H6z" stroke="#555" /></Svg>
                        </ViewButton>
                        <ViewButton aria-label="幻灯片浏览">
                            <Svg w={12} h={11}><path d="M.5.500h4v3h-4zM7 .5h4v3H7zM.5 6.500h4v3h-4zM7 6.500h4v3H7z" stroke="#555" /></Svg>
                        </ViewButton>
                        <ViewButton aria-label="幻灯片放映视图">
                            <Svg w={12} h={11}><path d="M0 1h12M1.500 1v5h9V1M6 6v4M3 10h6" stroke="#555" strokeWidth="1.500" /></Svg>
                        </ViewButton>
                    </Views>
                    <Percent>143%</Percent>
                    <RoundButton aria-label="缩小">
                        <Svg w={8} h={8}><path d="M0 4h8" stroke="#4f5f78" strokeWidth="2" /></Svg>
                    </RoundButton>
                    <ZoomSlider type="range" min="0" max="100" defaultValue="56" aria-label="显示比例" />
                    <RoundButton aria-label="放大">
                        <Svg w={8} h={8}><path d="M0 4h8M4 0v8" stroke="#4f5f78" strokeWidth="2" /></Svg>
                    </RoundButton>
                    <FitButton aria-label="使幻灯片适应当前窗口">
                        <Svg>
                            <rect x=".5" y=".5" width="14" height="14" fill="#f5f7fa" stroke="#555" strokeDasharray="2 1" />
                            <path d="M7.500 2v4M7.500 9v4M2 7.500h4M9 7.500h4" stroke="#444" />
                        </Svg>
                    </FitButton>
                </StatusRight>
            </StatusBar>
            <Taskbar>
                <StartButton aria-label="开始菜单">
                    <Svg w={24} h={24}>
                        <path d="M3 6q4-3 8-1L9.500 11q-4-2-8 0z" fill="#f0642c" />
                        <path d="M13 6q4 2 9-1l-2 7q-4 2-8.500 0z" fill="#8cc63f" />
                        <path d="M1 13q4-2 8 0l-2 7q-3-2-7 0z" fill="#3f9fe0" />
                        <path d="M11 14q4 2 8.500 0l-2 7q-4 2-8 0z" fill="#fcc52c" />
                    </Svg>
                </StartButton>
                {taskItems.map(item => (
                    <TaskButton
                        key={item.name}
                        aria-label={item.name}
                        $active={item.active}
                        $light={item.light}
                        $stack={item.stack}
                    >
                        {item.art}
                    </TaskButton>
                ))}
                <Tray>
                    <Svg w={16} h={14}>
                        <path d="M2 3q5 1 6-1t5-1" stroke="#c9cfd6" />
                        <rect x=".5" y="5.500" width="15" height="8" rx="1" fill="#c9cfd6" />
                        <path d="M2 8h12M2 10h12M4 12h8" stroke="#445" strokeDasharray="1 1" />
                    </Svg>
                    <TrayHelp>?</TrayHelp>
                    <Svg w={9} h={20}>
                        <path d="M3 3.500V1.500h5v3H6M.5 3.500h5v3h-5z" stroke="#fff" />
                        <path d="M1 14h6l-3 3z" fill="#fff" />
                    </Svg>
                    <Caret up color="#fff" />
                    <Svg>
                        <path d="M2 1v14" stroke="#fff" strokeWidth="1.500" />
                        <path d="M3 2h4l1 1h6v7H8L7 9H3z" fill="#fff" />
                        <circle cx="11" cy="11" r="4.500" fill="#d8281c" />
                        <path d="M9 9l4 4M13 9l-4 4" stroke="#fff" strokeWidth="1.500" />
                    </Svg>
                    <Svg>
                        <rect x="6" y="4" width="9" height="8" fill="#12305a" stroke="#fff" strokeWidth="1.500" />
                        <path d="M1 1v3q0 2 2 2t2-2V1M3 6v8h8M8 14h6" stroke="#fff" strokeWidth="1.500" />
                    </Svg>
                    <Clock>
                        <span>21:39</span>
                        <span>2024/8/13</span>
                    </Clock>
                    <ShowDesktop aria-label="显示桌面" />
                </Tray>
            </Taskbar>
        </Window>
    </>
);

/* ---------- styles ---------- */

const GlobalStyle = createGlobalStyle`
    * { box-sizing: border-box; }
    body { margin: 0; background: #0b2950; font: 12px/16px ${ui}; text-spacing-trim: space-all; }
    button { border: 0; padding: 0; margin: 0; background: none; font: inherit; color: inherit; }
    svg { flex: none; display: block; }
`;

const Window = styled.div`
    display: flex;
    flex-direction: column;
    height: 100vh;
    overflow: hidden;
    color: #1e3f7f;
`;

const TitleBar = styled.header`
    position: relative;
    flex: none;
    display: flex;
    align-items: center;
    height: 26px;
    border-bottom: 1px solid #12305a;
    box-shadow: inset 0 -1px #a9cbd8;
    background:
        radial-gradient(ellipse 28px 14px at 1407px 18px, #6394cf 40%, transparent),
        radial-gradient(ellipse 28px 14px at 1484px 18px, #6394cf 40%, transparent),
        radial-gradient(ellipse 28px 14px at 1560px 18px, #6394cf 40%, transparent),
        radial-gradient(ellipse 28px 14px at 1186px 18px, #4f7fb8 40%, transparent),
        linear-gradient(90deg, #7d93a8 0, #6c8bac 130px, #5a7ba0 170px, #27466f 270px, #1d4270 420px,
            #06224e 490px, #0d3364 620px, #051f4c 700px, #051f4c 74%, #12386c 84%, #1b3e6e 91%,
            #9aa8b8 96%, #b7a8a6 100%);
`;

const OfficeButton = styled.button`
    position: absolute;
    left: 5px;
    top: 4px;
    z-index: 2;
    display: grid;
    place-items: center;
    width: 36px;
    height: 37px;
    border-radius: 50%;
    border: 1px solid #8090a8;
    background: radial-gradient(circle at 50% 30%, #fff 20%, #d4d9e2 60%, #b7c0cf);
    box-shadow: 0 1px 2px #5b6c88;
`;

const QuickBar = styled.div`
    display: flex;
    align-items: center;
    gap: 6px;
    height: 22px;
    margin-left: 44px;
    padding: 0 12px 0 8px;
    border: 1px solid #b8c8dc;
    border-radius: 0 11px 11px 0;
    background: rgba(190, 205, 224, 0.55);
`;

const QuickMore = styled.button`
    margin-left: 6px;
`;

const ContextTitle = styled.span`
    position: absolute;
    left: 530px;
    top: 0;
    width: 62px;
    height: 25px;
    line-height: 24px;
    text-align: center;
    color: #111;
    text-shadow: 0 0 4px #fff, 0 0 4px #fff;
    background: linear-gradient(#6a7888, #9a9a78 60%, #e2c860);
`;

const WindowTitle = styled.h1`
    position: absolute;
    left: 0;
    right: 0;
    margin: 0;
    font-size: 12px;
    line-height: 26px;
    font-weight: 400;
    text-align: center;
    color: #000;
    span {
        padding: 0 4px;
        background: rgba(170, 190, 218, 0.6);
        box-shadow: 0 0 6px 4px rgba(170, 190, 218, 0.6);
        text-shadow: 0 0 4px #e8effa, 0 0 6px #e8effa;
    }
`;

const WindowButtons = styled.div`
    position: relative;
    z-index: 1;
    align-self: flex-start;
    display: flex;
    margin-left: auto;
    margin-right: 3px;
    border: 1px solid #2c3c52;
    border-top: 0;
    border-radius: 0 0 5px 5px;
    overflow: hidden;
`;

const WindowButton = styled.button`
    display: grid;
    place-items: center;
    width: ${({ $width }) => $width}px;
    height: 17px;
    border-right: 1px solid #5c6c84;
    background: ${({ $red }) =>
        $red
            ? 'linear-gradient(#e2a293, #cf5d47 45%, #b52a14 50%, #d8542c)'
            : 'linear-gradient(#c4ccd6, #a4aebb 45%, #6c7a8c 50%, #8a98aa)'};
`;

const TabRow = styled.nav`
    flex: none;
    display: flex;
    height: 26px;
    padding: 0 3px 0 48px;
    background: #bfdbff;
`;

const Tab = styled.button`
    height: 26px;
    padding: 0 14px 0 15px;
    line-height: 26px;
    white-space: nowrap;
    ${({ $on }) =>
        $on &&
        css`
            margin-top: 1px;
            margin-right: 2px;
            padding: 0 11px;
            line-height: 24px;
            border: 1px solid #8db2e3;
            border-bottom: 0;
            border-radius: 3px 3px 0 0;
            background: linear-gradient(#fafcff, #dfebf8);
        `}
    ${({ $context }) =>
        $context &&
        css`
            margin-left: 2px;
            padding: 0 18px;
            border-left: 1px solid #a9bfc8;
            border-right: 1px solid #a9bfc8;
            background: linear-gradient(#d7e0d4, #c5dcf5 60%);
        `}
`;

const HelpButton = styled.button`
    align-self: center;
    margin-left: auto;
    width: 14px;
    height: 14px;
    border: 1px solid #fff;
    border-radius: 50%;
    background: #1f5bc4;
    box-shadow: 0 0 0 1px #6f93cc;
    color: #fff;
    font-size: 10px;
    line-height: 12px;
    font-weight: 700;
`;

const StyledRibbon = styled.section`
    flex: none;
    display: flex;
    gap: 3px;
    height: 108px;
    padding: 3px 4px;
    border-top: 1px solid #8db2e3;
    border-bottom: 2px solid #8fabd2;
    background: linear-gradient(#dbe6f3 0, #d3dfef 16px, #c8d8ed 18px, #d5e4f1 80%, #e0f4fd 100%);
`;

const StyledGroup = styled.section`
    flex: none;
    display: flex;
    flex-direction: column;
    width: ${({ $width }) => $width}px;
    height: 100px;
    border: 1px solid #a6c2de;
    border-radius: 3px;
    box-shadow: inset 0 0 0 1px rgba(255, 255, 255, 0.4);
    background: linear-gradient(#dde8f4 0, #d3e0f0 16px, #c9d9ed 17px, #d7e5f2 100%);
`;

const GroupBody = styled.div`
    flex: 1;
    display: flex;
    gap: 2px;
    padding: 0 4px 0 3px;
`;

const GroupTitle = styled.h2`
    position: relative;
    margin: 0;
    height: 19px;
    padding-right: ${({ $launcher }) => ($launcher ? 16 : 0)}px;
    font-size: 12px;
    line-height: 18px;
    font-weight: 400;
    text-align: center;
    color: #3e6aaa;
    background: #c1d8f0;
`;

const Launcher = styled.button`
    position: absolute;
    right: 4px;
    top: 4px;
`;

const ToolColumn = styled.div`
    display: flex;
    flex-direction: column;
    align-items: flex-start;
    margin-left: auto;
`;

const SmallButton = styled.button`
    display: flex;
    align-items: center;
    gap: 3px;
    height: 22px;
    color: #1e3f7f;
    white-space: nowrap;
    &:disabled {
        color: #8d8d8d;
    }
`;

const BigButton = styled.button`
    display: flex;
    flex-direction: column;
    align-items: center;
    min-width: 40px;
    padding: 3px 2px 0;
    white-space: nowrap;
    > svg:first-child {
        height: 32px;
        margin-bottom: 4px;
    }
    > svg:last-child {
        margin-top: 7px;
    }
    span {
        display: flex;
        align-items: center;
        gap: 3px;
        line-height: 16px;
    }
`;

const ControlRows = styled.div`
    display: flex;
    flex-direction: column;
    gap: 12px;
    padding-top: 10px;
`;

const ControlRow = styled.div`
    display: flex;
    gap: 3px;
    height: 24px;
    align-items: center;
`;

const Combos = styled.div`
    display: flex;
`;

const Combo = styled.label`
    display: flex;
    align-items: center;
    width: ${({ $width }) => $width}px;
    height: 24px;
    padding-right: 4px;
    border: 1px solid #b3c8e4;
    background: #eaf2fb;
    select {
        flex: 1;
        min-width: 0;
        padding: 0 2px;
        border: 0;
        appearance: none;
        background: none;
        font: 12px/20px ${ui};
        color: #000;
    }
`;

const ButtonSet = styled.div`
    display: flex;
    height: 21px;
    border: 1px solid #9fb8da;
    border-radius: 3px;
    background: linear-gradient(#dde8f6, #c8d9ef 45%, #d3e2f4);
`;

const Glyph = styled.button`
    display: flex;
    align-items: center;
    justify-content: center;
    gap: 2px;
    width: ${({ $width }) => $width}px;
    font-family: ${({ $serif }) => ($serif ? '"Liberation Serif", serif' : ui)};
    font-size: ${({ $size }) => $size || 12}px;
    font-weight: ${({ $serif }) => ($serif ? 700 : 400)};
    line-height: 18px;
    color: #222;
    background: ${({ $on }) => ($on ? 'linear-gradient(#fbd79a, #f9b049 50%, #fde08a)' : 'none')};
    ${({ $raised }) =>
        $raised &&
        css`
            gap: 0;
            svg {
                align-self: flex-start;
                margin-top: 3px;
            }
        `}
`;

const Kern = styled.span`
    display: flex;
    flex-direction: column;
    align-items: center;
    line-height: 12px;
`;

const ColorA = styled.span`
    width: 16px;
    height: 18px;
    line-height: 14px;
    border-bottom: 4px solid #f00;
    color: #2c4f8f;
`;

const Gallery = styled.div`
    display: flex;
    height: 60px;
    margin-top: 3px;
    border: 1px solid #b3c8e4;
    background: #dbe8f8;
`;

const ShapeGrid = styled.div`
    display: grid;
    grid-template-columns: repeat(6, 20px);
`;

const ShapeButton = styled.button`
    display: grid;
    place-items: center;
`;

const GalleryScroll = styled.div`
    display: grid;
    width: 15px;
    button {
        display: grid;
        place-items: center;
        border: 1px solid #b3c8e4;
        background: #d3e3f8;
    }
    button:disabled {
        background: #e8eaee;
    }
`;

const Main = styled.main`
    flex: 1;
    display: flex;
    min-height: 0;
    background: #a5c5f0;
`;

const StyledSide = styled.aside`
    flex: none;
    display: flex;
    flex-direction: column;
    width: 284px;
    border-right: 1px solid #5f86bd;
`;

const SideTabs = styled.div`
    flex: none;
    display: flex;
    height: 24px;
    background: linear-gradient(#c9defa, #9fc0ec);
    border-bottom: 1px solid #7ea3d4;
`;

const SideTab = styled.button`
    width: ${({ $on }) => ($on ? 54 : 58)}px;
    height: 23px;
    padding-right: ${({ $on }) => ($on ? 4 : 20)}px;
    line-height: 20px;
    color: #0d1f66;
    border: 1px solid #7397cc;
    border-bottom: 0;
    border-radius: 3px 18px 0 0;
    background: ${({ $on }) => ($on ? 'linear-gradient(#fff, #c9ddf9)' : 'linear-gradient(#d3e4fa, #9dbfee)')};
`;

const CloseButton = styled.button`
    margin-left: auto;
    margin-right: 6px;
`;

const SideBody = styled.div`
    flex: 1;
    display: flex;
    min-height: 0;
    overflow: hidden;
    background: linear-gradient(#9dbbe4, #6d94cc 40%, #5a85bf);
`;

const ThumbList = styled.ol`
    flex: 1;
    margin: 0;
    padding: 3px 2px 0 3px;
    list-style: none;
`;

const Thumb = styled.button`
    display: flex;
    align-items: flex-start;
    width: 262px;
    height: 140px;
    margin-bottom: 4px;
    border: 1px solid ${({ $on }) => ($on ? '#d98a2c' : 'transparent')};
    border-radius: 2px;
    background: ${({ $on }) => ($on ? 'linear-gradient(#f7cf98, #eeb566 35%, #e99a2a 36%, #f8b04a)' : 'none')};
`;

const ThumbNo = styled.span`
    width: 27px;
    padding-top: 6px;
    font-weight: 700;
    color: #fff;
    text-align: left;
    text-shadow: 1px 1px 1px #23406c;
`;

const ThumbArt = styled.svg`
    width: 229px;
    height: 130px;
    margin-top: 5px;
    border: 1px solid #f5f5f5;
    background: #fff;
    box-shadow: 1px 1px 3px #1d3658;
`;

const ScrollTrack = styled.div`
    flex: ${({ $pale }) => ($pale ? 'none' : '1 0 auto')};
    display: flex;
    flex-direction: column;
    align-items: center;
    width: 16px;
    max-width: 16px;
    border-left: 1px solid #6d90c4;
    background: ${({ $pale }) => ($pale ? '#7f9fcb' : 'linear-gradient(90deg, #7695c4, #88a6d2)')};
`;

const ArrowButton = styled.button`
    display: grid;
    place-items: center;
    width: 15px;
    height: 17px;
`;

const ScrollGap = styled.div`
    flex: ${({ $grow }) => $grow};
`;

const ScrollThumb = styled.div`
    width: 14px;
    height: ${({ $small }) => ($small ? 9 : 15)}px;
    border: 1px solid #6a7f9f;
    border-radius: 2px;
    background: repeating-linear-gradient(#eef3fa 0 2px, #a8b4c4 2px 3px);
`;

const Editor = styled.div`
    flex: 1;
    display: flex;
    flex-direction: column;
    min-width: 0;
    margin-left: 4px;
`;

const Stage = styled.div`
    flex: 1;
    display: flex;
    min-height: 0;
`;

const Canvas = styled.div`
    flex: 1;
    display: flex;
    min-width: 0;
    padding: 18px 123px 17px;
    background:
        radial-gradient(ellipse 420px 110px at 340px 106px, rgba(255, 255, 255, 0.25) 99%, transparent 100%) 0 0 /
            123px 100px no-repeat,
        linear-gradient(#a3c1ea, #6b92cc 50%, #5f88c2);
`;

const StageScroll = styled.div`
    flex: none;
    display: flex;
    flex-direction: column;
    width: 16px;
`;

const PageButtons = styled.div`
    flex: none;
    display: flex;
    flex-direction: column;
    align-items: center;
    gap: 6px;
    height: 48px;
    padding-top: 4px;
    background: #a9c7f5;
`;

const StyledSlide = styled.article`
    position: relative;
    flex: 1;
    min-width: 0;
    background: #fff;
    color: #000;
    box-shadow: 3px 4px 6px rgba(20, 40, 80, 0.7);
`;

const SlideTitle = styled.h2`
    display: flex;
    align-items: flex-end;
    height: 72px;
    margin: 0;
    padding-left: 67px;
    font: 400 38px/44px ${song};
    color: #fff;
    background: #339966;
`;

const TextBody = styled.div`
    padding: 11px 0 0 36px;
    font-family: ${song};
`;

const kinds = {
    head: '50px',
    step: '38px',
    caret: '26px',
    flow: '28px',
    last: '40px',
};

const Line = styled.p`
    display: block;
    height: ${({ $kind }) => kinds[$kind]};
    margin: ${({ $kind }) => ($kind === 'last' ? '60px' : 0)} 0 0 ${({ $indent }) => ($indent ? 32 : 0)}px;
    font-size: ${({ $size }) => $size}px;
    line-height: ${({ $kind }) => kinds[$kind]};
    white-space: nowrap;
`;

const Run = styled.span`
    font-size: ${({ $size }) => $size}px;
    line-height: 1;
    color: ${({ $color }) => $color || '#000'};
    ${({ $wavy }) =>
        $wavy &&
        css`
            text-decoration: underline wavy #d8141c 1px;
            text-underline-offset: 3px;
            text-decoration-skip-ink: none;
        `}
`;

const Latin = styled.span`
    font-family: ${ui};
    font-size: 20px;
`;

const TextCaret = styled.i`
    display: block;
    width: 1px;
    height: 21px;
    background: #000;
`;

const PcbSvg = styled.svg`
    position: absolute;
    right: 21px;
    top: 154px;
    width: 375px;
    height: 260px;
`;

const PcbCaption = styled.p`
    position: absolute;
    right: 112px;
    top: 373px;
    width: 240px;
    height: 18px;
    margin: 0;
    padding-left: 2px;
    border: 1px solid #1414c8;
    background: #fff;
    color: #f00;
    font: 8px/13px "Noto Sans CJK SC", sans-serif;
    white-space: nowrap;
`;

const GreenArrow = styled.svg`
    position: absolute;
    left: 407px;
    top: 323px;
    width: 482px;
    height: 60px;
    fill: none;
`;

const dashX = 'repeating-linear-gradient(90deg, #56709a 0 8px, transparent 8px 11px)';
const dashY = 'repeating-linear-gradient(#56709a 0 8px, transparent 8px 11px)';

const Selection = styled.div`
    position: absolute;
    inset: 74px 95px 62px 21px;
    background:
        ${dashX} top / 100% 1px no-repeat,
        ${dashX} bottom / 100% 1px no-repeat,
        ${dashY} left / 1px 100% no-repeat,
        ${dashY} right / 1px 100% no-repeat;
`;

const Rotate = styled.i`
    position: absolute;
    left: 50%;
    top: -29px;
    width: 9px;
    height: 9px;
    margin-left: -4px;
    border: 1px solid #4f7f2c;
    border-radius: 50%;
    background: #8ade3c;
    &::after {
        content: '';
        position: absolute;
        left: 3px;
        top: 8px;
        height: 16px;
        border-left: 1px solid #3f7a68;
    }
`;

const Handle = styled.i`
    position: absolute;
    left: ${({ $x }) => $x};
    top: ${({ $y }) => $y};
    width: 9px;
    height: 9px;
    margin: -4px;
    border: 1px solid #6a7f9c;
    border-radius: ${({ $round }) => ($round ? '50%' : '1px')};
    background: #fff;
`;

const Erp = styled.div`
    position: absolute;
    left: 535px;
    top: 611px;
    right: 55px;
    height: 149px;
    display: flex;
    border-top: 2px solid #8394a4;
    font: 9px/12px ${song};
    overflow: hidden;
    table {
        border-collapse: collapse;
        table-layout: fixed;
        width: 100%;
    }
    th,
    td {
        padding: 0 2px;
        font-weight: 400;
        white-space: nowrap;
        overflow: hidden;
    }
`;

const ErpTree = styled.section`
    flex: none;
    display: flex;
    flex-direction: column;
    width: 325px;
    border-left: 3px solid #8a97a6;
    border-right: 5px solid #7f95b2;
    background: #e8eff8;
`;

const ErpLegend = styled.h3`
    align-self: flex-start;
    margin: 0 0 1px 16px;
    padding: 0 6px;
    height: 15px;
    border: 1px solid #93a9c4;
    border-radius: 0 0 3px 3px;
    font: 9px/12px ${song};
    color: #2a4684;
    background: #edf3fb;
`;

const TreeTable = styled.table`
    flex: 1;
    background: #fff;
    display: table;
    height: 131px;
    th {
        height: 13px;
        text-align: left;
        border-right: 1px solid #b5c4d6;
        background: #dfe9f6;
    }
    td {
        height: 14px;
        border-right: 1px solid #e2e6ec;
    }
    th:first-child {
        width: 118px;
    }
    th:nth-child(2) {
        width: 43px;
    }
    th:last-child,
    td:last-child {
        text-align: center;
    }
`;

const TreeRow = styled.tr`
    background: ${({ $on }) => ($on ? '#e9e9e9' : '#fff')};
`;

const FillRow = styled.tr`
    height: 76px;
`;

const Node = styled.span`
    display: flex;
    align-items: center;
    gap: 3px;
    height: 13px;
    padding-left: ${({ $level }) => $level * 14}px;
`;

const ErpDetail = styled.section`
    flex: 1;
    display: flex;
    flex-direction: column;
    min-width: 0;
`;

const ErpBar = styled.div`
    height: 19px;
    background: linear-gradient(#c5d8ee, #dbe8f6);
`;

const ErpBadge = styled.h3`
    margin: 0;
    width: 53px;
    height: 19px;
    text-align: center;
    font: 700 10px/17px ${song};
    color: #fff;
    background: #2466c4;
`;

const ErpPanes = styled.div`
    flex: 1;
    display: flex;
`;

const ErpPane = styled.div`
    flex: ${({ $grey }) => ($grey ? '1' : 'none')};
    width: ${({ $grey }) => ($grey ? 'auto' : '323px')};
    padding-right: ${({ $grey }) => ($grey ? 0 : 2)}px;
    border-right: ${({ $grey }) => ($grey ? '0' : '4px solid #6a93d4')};
    background: ${({ $grey }) => ($grey ? '#efefef' : '#fff')};
`;

const ErpTabRow = styled.div`
    height: 20px;
    padding: 1px 0 0 8px;
    border-bottom: 4px solid #88aee6;
    background: #d9e6f5;
`;

const ErpTab = styled.h4`
    margin: 0;
    width: 68px;
    height: 15px;
    padding-left: 14px;
    text-align: center;
    font: 700 10px/15px ${song};
    border: 1px solid #88aee6;
    border-radius: 14px 3px 0 0;
    background: #b5cff2;
`;

const ParamTable = styled.table`
    th {
        height: 22px;
        border: 1px solid #b8cbe4;
        background: #e5eef9;
        text-align: center;
    }
    td {
        height: 15px;
        border: 1px solid #dbe3ee;
    }
    td:first-child,
    td:nth-child(4) {
        background: #d8e5f4;
    }
    tr:nth-child(even) td {
        background-color: #f2f2f2;
    }
    th:first-child {
        width: 27px;
    }
    th:nth-child(2) {
        width: 76px;
    }
    th:nth-child(3) {
        width: 112px;
    }
    th:nth-child(4),
    th:nth-child(5) {
        width: 46px;
    }
`;

const ParamName = styled.td`
    background: ${({ $on }) => ($on ? '#a9cdf5' : '#fff')};
`;

const ErpNoteHead = styled.p`
    margin: 0;
    padding: 0 2px;
    height: 17px;
    line-height: 17px;
    color: #2a5290;
    border-bottom: 1px solid #777;
    background: #dfe9f6;
`;

const ErpNote = styled.p`
    margin: 0;
    padding: 0 2px;
`;

const Notes = styled.section`
    flex: none;
    display: flex;
    height: 52px;
    border-top: 6px solid #b3d3fb;
    textarea {
        flex: 1;
        padding: 3px 10px;
        border: 0;
        border-top: 1px solid #6a8fc4;
        resize: none;
        overflow: hidden;
        background: #fff;
        color: #000;
        font: 16px/22px ${song};
    }
`;

const StatusBar = styled.footer`
    flex: none;
    display: flex;
    height: 23px;
    border-top: 1px solid #567db1;
    background: linear-gradient(#dceafc, #cadefa 35%, #a9cbf6 40%, #cfe2fb);
`;

const StatusCell = styled.span`
    width: ${({ $width }) => $width}px;
    line-height: 21px;
    text-align: center;
    border-right: 1px solid #a3bfe2;
    box-shadow: 1px 0 #f1f7ff;
`;

const StatusRight = styled.div`
    display: flex;
    align-items: center;
    margin-left: auto;
    padding: 0 5px;
    border-left: 1px solid #7e9cc8;
    background: linear-gradient(#c3d9f5, #8fb3e6 45%, #b3d0f5);
`;

const Views = styled.div`
    display: flex;
    border: 1px solid #7f9fcc;
    border-radius: 2px;
`;

const ViewButton = styled.button`
    display: grid;
    place-items: center;
    width: 18px;
    height: 17px;
    background: ${({ $on }) => ($on ? 'linear-gradient(#fddc9a, #f8b64c)' : 'linear-gradient(#dbe8f9, #bcd3f2)')};
`;

const Percent = styled.button`
    margin: 0 9px;
`;

const RoundButton = styled.button`
    display: grid;
    place-items: center;
    width: 16px;
    height: 16px;
    border: 1px solid #5f7596;
    border-radius: 50%;
    background: linear-gradient(#fff, #cfd9e8);
`;

const ZoomSlider = styled.input`
    width: 100px;
    height: 16px;
    margin: 0 1px;
    appearance: none;
    background: linear-gradient(#6484b0, #6484b0) center / 100% 1px no-repeat;
    &::-webkit-slider-thumb {
        appearance: none;
        width: 9px;
        height: 13px;
        border: 1px solid #5f7596;
        border-radius: 1px 1px 5px 5px;
        background: #eef3fa;
    }
`;

const FitButton = styled.button`
    margin-left: 9px;
`;

const Taskbar = styled.footer`
    flex: none;
    display: flex;
    align-items: center;
    gap: 4px;
    height: 39px;
    padding-left: 8px;
    border-top: 1px solid #5c7694;
    background: linear-gradient(#1c3c68 0, #0c2a56 6px, transparent 20px),
        linear-gradient(90deg, #1c3048, #27426a 20%, #0b2a5a 55%, #062050 80%, #122a48);
`;

const StartButton = styled.button`
    display: grid;
    place-items: center;
    width: 38px;
    height: 38px;
    margin-right: 10px;
    border: 1px solid #6f9cc4;
    border-radius: 50%;
    background: radial-gradient(circle at 50% 90%, #5cc8e8, #2a6c9c 45%, #1b3c64 80%);
`;

const TaskButton = styled.button`
    flex: none;
    display: grid;
    place-items: center;
    width: ${({ $stack }) => ($stack ? 50 : 58)}px;
    height: 38px;
    margin-right: ${({ $stack }) => ($stack ? 7 : 0)}px;
    border: 1px solid #8c9cb2;
    border-radius: 3px;
    background: ${({ $active, $light }) =>
        $active
            ? 'linear-gradient(135deg, #e8eaee, #a5adbb 50%, #b9c0cc)'
            : $light
              ? 'linear-gradient(135deg, #a9b2b8, #5d7180 45%, #546a80)'
              : 'linear-gradient(135deg, #75859a, #2d4568 45%, #30486e)'};
    box-shadow: ${({ $stack }) => ($stack ? '3px 0 0 -1px #2d4568, 4px 0 #8c9cb2' : 'none')};
`;

const Tray = styled.div`
    display: flex;
    align-items: center;
    gap: 9px;
    height: 38px;
    margin-left: auto;
    color: #fff;
`;

const TrayHelp = styled.span`
    width: 15px;
    height: 15px;
    border: 1px solid #c5cfe8;
    border-radius: 50%;
    background: #1a22b8;
    font-size: 11px;
    font-weight: 700;
    line-height: 13px;
    text-align: center;
`;

const Clock = styled.time`
    display: flex;
    flex-direction: column;
    align-items: center;
    width: 64px;
    line-height: 18px;
`;

const ShowDesktop = styled.button`
    width: 14px;
    height: 38px;
    border: 1px solid #6a7c94;
    background: linear-gradient(#5a6c84, #14294a 60%);
`;

export default App;
